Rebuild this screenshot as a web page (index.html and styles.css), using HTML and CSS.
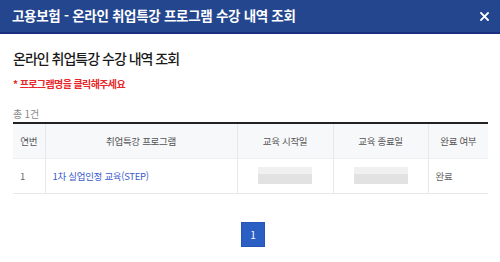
FILE: index.html
```html
<!DOCTYPE html>
<html lang="ko">
<head>
<meta charset="utf-8">
<link rel="stylesheet" href="styles.css">
</head>
<body>
<div class="modal">
  <div class="modal-header">
    <span class="modal-title">고용보험 - 온라인 취업특강 프로그램 수강 내역 조회</span>
    <span class="close" aria-label="닫기">
      <svg width="9" height="9" viewBox="0 0 9 9"><path d="M1 1L8 8M8 1L1 8" stroke="#fff" stroke-width="1.8" stroke-linecap="square"/></svg>
    </span>
  </div>
  <div class="modal-body">
    <h2 class="page-title">온라인 취업특강 수강 내역 조회</h2>
    <p class="notice">* 프로그램명을 클릭해주세요</p>
    <p class="count">총 1건</p>
    <table class="list">
      <colgroup>
        <col class="c-no"><col class="c-prog"><col class="c-start"><col class="c-end"><col class="c-done">
      </colgroup>
      <thead>
        <tr><th>연번</th><th>취업특강 프로그램</th><th>교육 시작일</th><th>교육 종료일</th><th>완료 여부</th></tr>
      </thead>
      <tbody>
        <tr>
          <td class="left">1</td>
          <td class="left"><a class="link" href="#">1차 실업인정 교육(STEP)</a></td>
          <td><span class="blur"></span></td>
          <td><span class="blur"></span></td>
          <td class="left">완료</td>
        </tr>
      </tbody>
    </table>
    <div class="pager"><span class="page on">1</span></div>
  </div>
</div>
</body>
</html>
```
FILE: styles.css
```css
* { box-sizing: border-box; }
html, body { margin: 0; padding: 0; background: #fff; }
body { font-family: "Noto Sans CJK KR", "Noto Sans", sans-serif; width: 500px; height: 262px; overflow: hidden; }
.modal-header {
  height: 34px;
  background: #23468f;
  border-bottom: 2px solid #1a2f80;
  display: flex;
  align-items: center;
  justify-content: space-between;
  padding: 0 11px 0 12px;
}
.modal-title { color: #fff; font-size: 13.5px; font-weight: 700; letter-spacing: -0.3px; line-height: 1; }
.close { display: flex; }
.modal-body { padding: 0 12px 0 13px; }
.page-title { margin: 13px 0 0; font-size: 14px; font-weight: 500; color: #1a1a1a; line-height: 22px; letter-spacing: -1px; }
.notice { margin: 8px 0 0; color: #e8262a; font-size: 10px; font-weight: 700; line-height: 14px; letter-spacing: -0.6px; }
.count { margin: 16px 0 0; color: #888; font-size: 10px; line-height: 14px; letter-spacing: -0.2px; }
.list { width: 475px; border-collapse: collapse; margin-top: 1px; border-top: 2px solid #222; table-layout: fixed; }
.c-no { width: 32px; } .c-prog { width: 192px; } .c-start { width: 96px; } .c-end { width: 95px; } .c-done { width: 60px; }
.list th { height: 35px; background: #f7f8fa; color: #555; font-size: 9.5px; font-weight: 400; letter-spacing: -0.3px; border-left: 1px solid #e6e8ec; border-bottom: 1px solid #eceef1; padding: 0; }
.list td { height: 35px; font-size: 9.5px; letter-spacing: -0.3px; color: #666; border-left: 1px solid #e6e8ec; border-bottom: 1px solid #e6e8ec; text-align: center; padding: 0; }
.list th:first-child, .list td:first-child { border-left: none; }
.list td.left { text-align: left; padding-left: 7px; }
.link { color: #3a5ccc; text-decoration: none; }
.blur { display: inline-block; width: 54px; height: 17px; vertical-align: middle; background: linear-gradient(#f0f0f0 0 40%, #e2e2e2 40% 100%); }
.pager { display: flex; justify-content: center; margin-top: 28px; padding-left: 5px; }
.page { width: 24px; height: 25px; background: #2b5fc4; border: 1px solid #2455b8; color: #fff; font-size: 10px; display: flex; align-items: center; justify-content: center; }
```
